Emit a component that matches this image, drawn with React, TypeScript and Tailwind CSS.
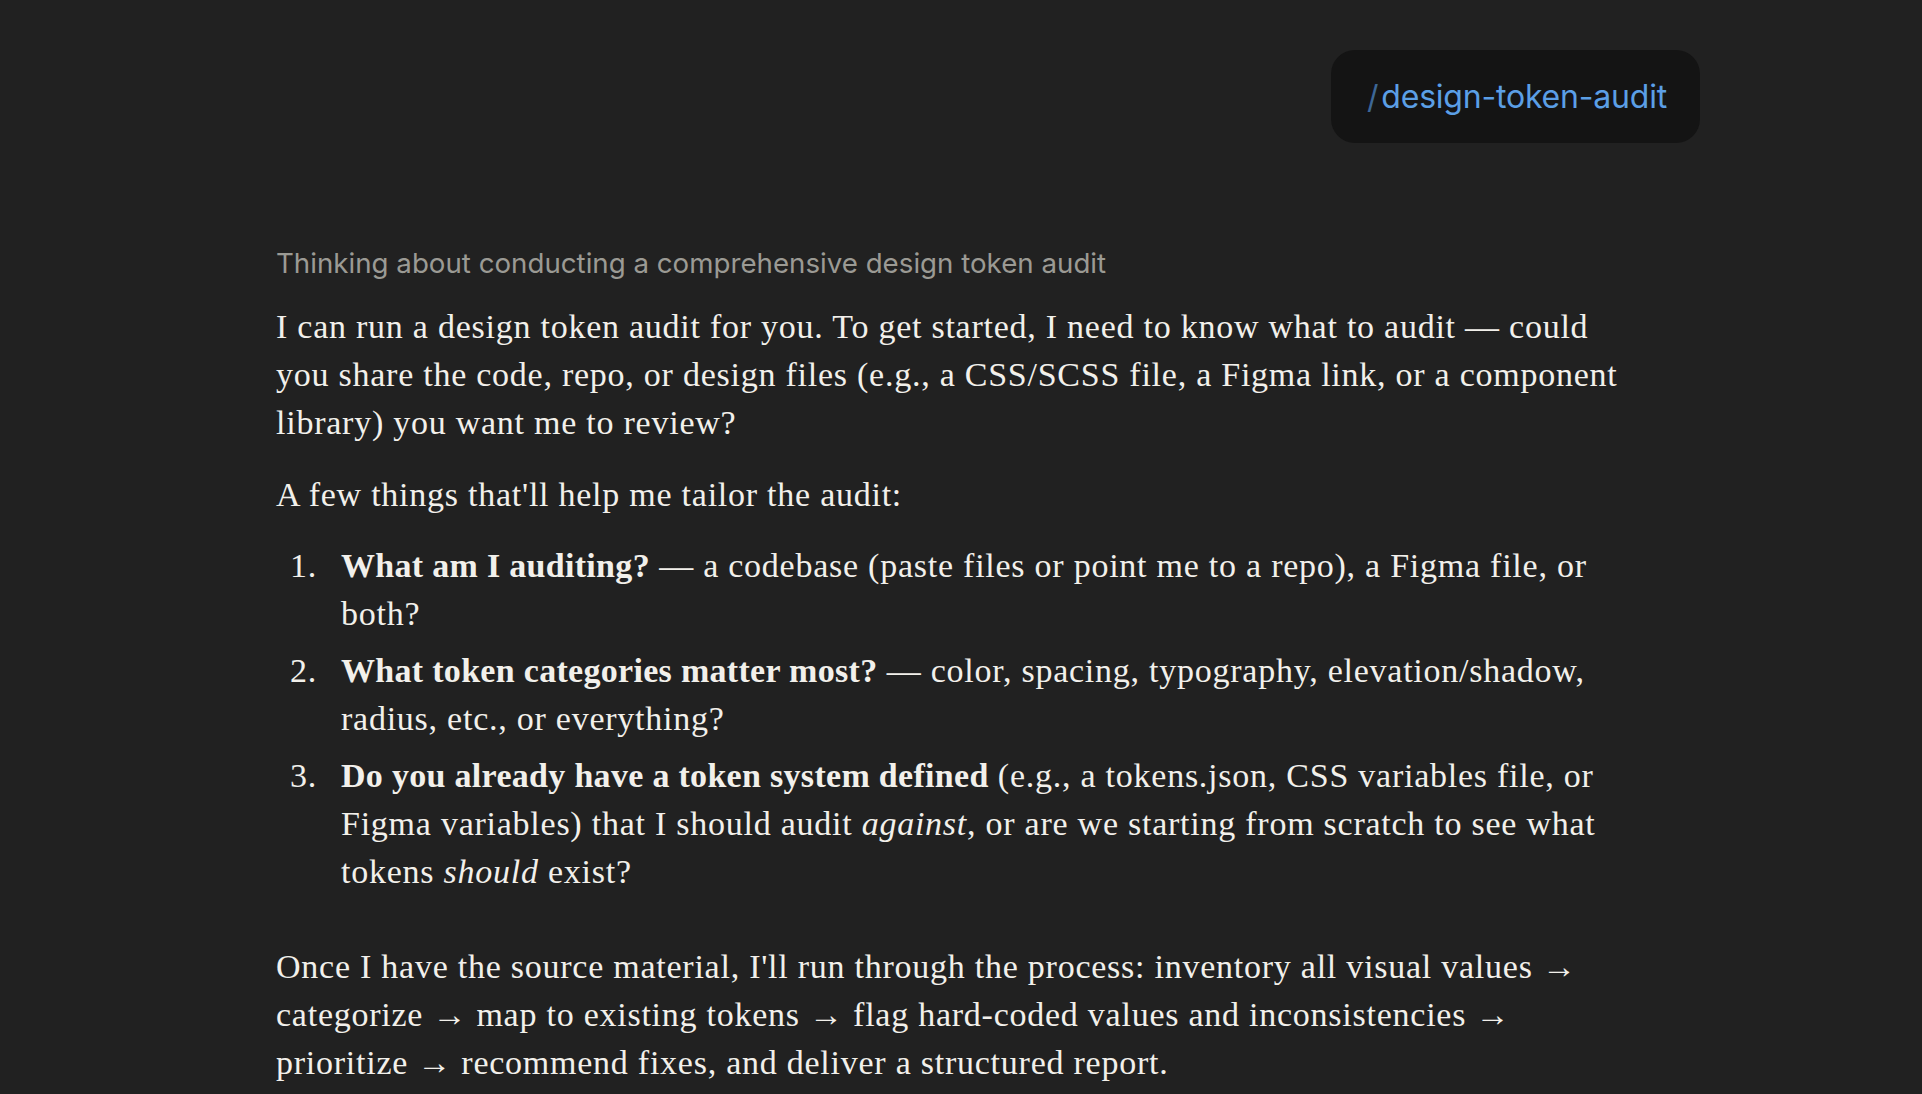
import React from "react";

const serif = { fontFamily: '"Liberation Serif", "Times New Roman", serif' };

export default function App() {
  return (
    <div className="min-h-[1094px] w-full bg-[#212121] text-[#f2f0eb]">
      <div className="pl-[276px] pr-[222px] pt-[50px]">
        <div className="flex justify-end">
          <div className="flex h-[93px] items-center rounded-[24px] bg-[#141414] pl-[36px] pr-[33px] font-['Inter',sans-serif] text-[32px] tracking-[-0.2px]">
            <span className="mr-[3px] text-[#3d6796]">/</span>
            <span className="text-[#5b9fe6]">design-token-audit</span>
          </div>
        </div>

        <div className="mt-[102px] font-['Inter',sans-serif] text-[27.7px] leading-[36px] text-[#9b9a94]">
          Thinking about conducting a comprehensive design token audit
        </div>

        <div className="mt-[22px] text-[34px] leading-[48px] tracking-[0.75px]" style={serif}>
          <p className="whitespace-nowrap">
            I can run a design token audit for you. To get started, I need to know what to audit — could
            <br />
            you share the code, repo, or design files (e.g., a CSS/SCSS file, a Figma link, or a component
            <br />
            library) you want me to review?
          </p>
          <p className="mt-[24px] whitespace-nowrap">A few things that'll help me tailor the audit:</p>
          <ol className="mt-[23px] flex flex-col gap-[9px] whitespace-nowrap">
            <li className="flex">
              <span className="w-[41px] shrink-0 text-right">1.</span>
              <span className="ml-[24px]">
                <strong className="font-bold tracking-[0.3px]">What am I auditing?</strong> — a codebase (paste files or point me to a repo), a Figma file, or
                <br />
                both?
              </span>
            </li>
            <li className="flex">
              <span className="w-[41px] shrink-0 text-right">2.</span>
              <span className="ml-[24px]">
                <strong className="font-bold tracking-[0.3px]">What token categories matter most?</strong> — color, spacing, typography, elevation/shadow,
                <br />
                radius, etc., or everything?
              </span>
            </li>
            <li className="flex">
              <span className="w-[41px] shrink-0 text-right">3.</span>
              <span className="ml-[24px]">
                <strong className="font-bold tracking-[0.3px]">Do you already have a token system defined</strong> (e.g., a tokens.json, CSS variables file, or
                <br />
                Figma variables) that I should audit <em className="italic">against</em>, or are we starting from scratch to see what
                <br />
                tokens <em className="italic">should</em> exist?
              </span>
            </li>
          </ol>
          <p className="mt-[47px] whitespace-nowrap">
            Once I have the source material, I'll run through the process: inventory all visual values →
            <br />
            categorize → map to existing tokens → flag hard-coded values and inconsistencies →
            <br />
            prioritize → recommend fixes, and deliver a structured report.
          </p>
        </div>
      </div>
    </div>
  );
}
